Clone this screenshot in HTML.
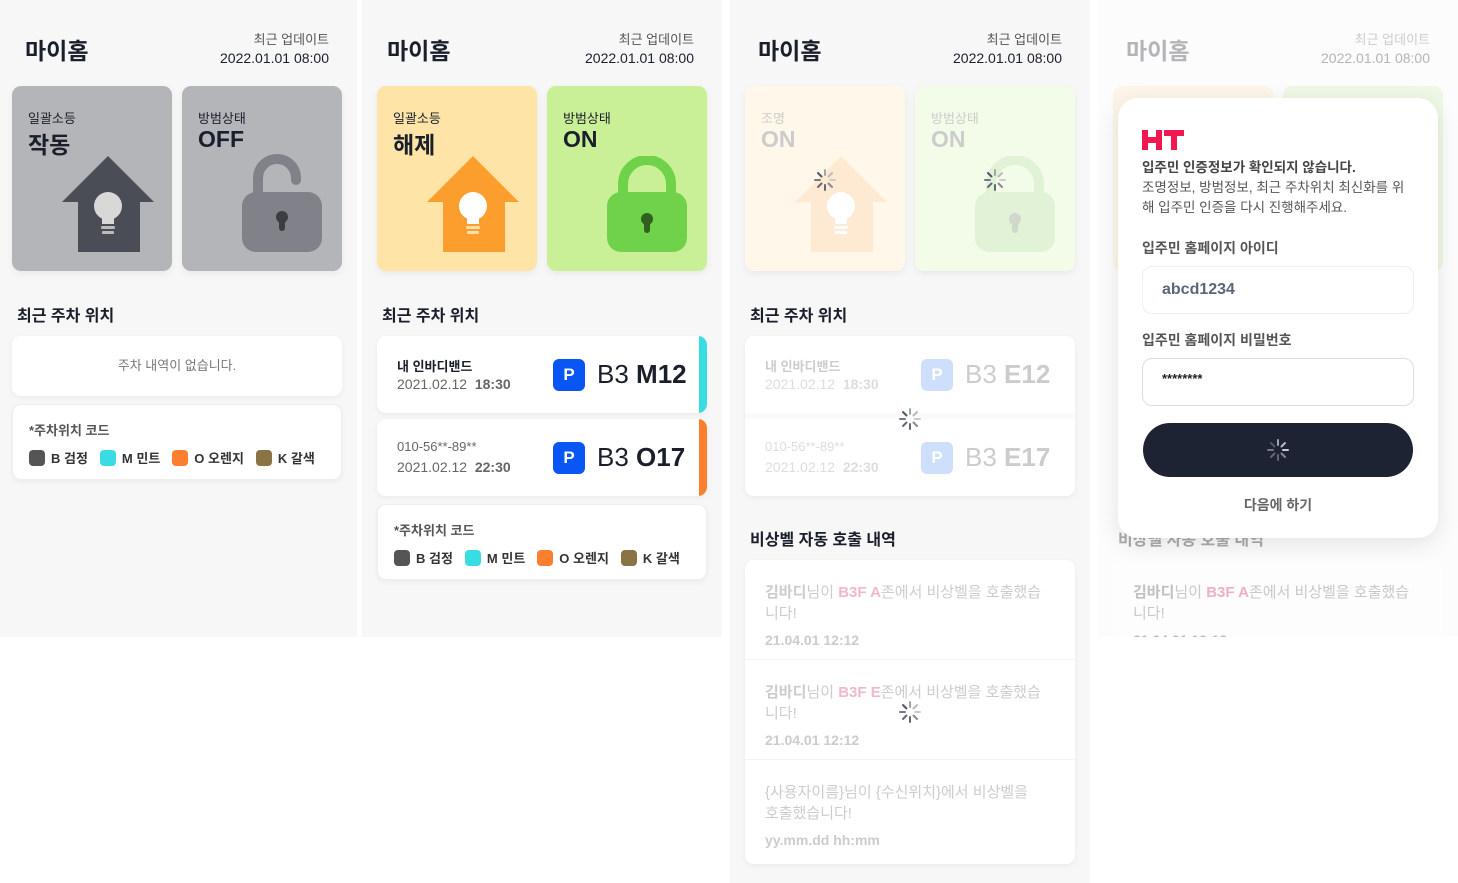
<!DOCTYPE html>
<html><head><meta charset="utf-8">
<style>
*{margin:0;padding:0;box-sizing:border-box}
body{width:1458px;height:883px;background:#fff;font-family:"Liberation Sans","Noto Sans CJK KR",sans-serif;position:relative;overflow:hidden;color:#1b1f2c}
.p{position:absolute;top:0;width:360px;background:#f7f7f7;overflow:hidden}
.a{position:absolute}
.t{left:25px;top:32px;font-size:23px;font-weight:700}
.up{right:28px;top:31px;text-align:right;font-size:13px;line-height:18px;color:#555}
.up b{font-weight:400;color:#1b1f2c;font-size:14px}
.tile{top:86px;width:160px;height:185px;border-radius:9px;box-shadow:0 3px 8px rgba(0,0,0,.06)}
.tile .s{position:absolute;left:16px;top:22px;font-size:13px}
.tile .v{position:absolute;left:16px;top:40px;font-size:23px;font-weight:700}
.h2{left:17px;top:302px;font-size:16px;font-weight:700}
.card{background:#fff;border-radius:9px;box-shadow:0 2px 6px rgba(0,0,0,.05);overflow:hidden}
.leg .l1{position:absolute;left:16px;top:15px;font-size:13px;color:#555;font-weight:700}
.leg .l2{position:absolute;left:16px;top:43px;font-size:13px;font-weight:700;color:#333;display:flex;gap:12px;align-items:center}
.leg i{display:inline-block;width:16px;height:16px;border-radius:4px;vertical-align:-3px;margin-right:6px}
.pk .n{position:absolute;left:20px;top:20px;font-size:13px;font-weight:700}
.pk .d{position:absolute;left:20px;top:40px;font-size:14px;color:#666}
.pk .pp{position:absolute;left:176px;top:23px;width:32px;height:32px;border-radius:6px;background:#0a56f5;color:#fff;font-weight:700;font-size:17px;text-align:center;line-height:32px}
.pk .c{position:absolute;left:220px;top:22px;font-size:26px;line-height:32px}
.pk .bar{position:absolute;right:0;top:0;width:8px;height:100%}
.em{padding:0 20px;font-size:15px;color:#ccc;line-height:21px;height:100px;border-bottom:1px solid #f3f3f3;padding-top:22px}
.em b{color:#f0b9c8}
.em .tm{font-weight:700;font-size:14px;margin-top:6px;color:#ccc}
</style></head><body>

<svg width="0" height="0" style="position:absolute">
<defs>
<g id="spin" stroke-width="2" stroke-linecap="round">
<line x1="0" y1="-10" x2="0" y2="-5" stroke="#9aa" /><line x1="7" y1="-7" x2="3.5" y2="-3.5" stroke="#bbb"/><line x1="10" y1="0" x2="5" y2="0" stroke="#ccc"/><line x1="7" y1="7" x2="3.5" y2="3.5" stroke="#889"/><line x1="0" y1="10" x2="0" y2="5" stroke="#667"/><line x1="-7" y1="7" x2="-3.5" y2="3.5" stroke="#667"/><line x1="-10" y1="0" x2="-5" y2="0" stroke="#778"/><line x1="-7" y1="-7" x2="-3.5" y2="-3.5" stroke="#556"/>
</g>
</defs></svg>

<!-- PANEL 1 -->
<div class="p" style="left:0;width:357px;height:637px">
<div class="a t">마이홈</div>
<div class="a up">최근 업데이트<br><b>2022.01.01 08:00</b></div>
<div class="a tile" style="left:12px;background:#b4b5b9"><div class="s">일괄소등</div><div class="v">작동</div>
<svg class="a" style="left:50px;top:70px" width="92" height="96" viewBox="0 0 92 96"><path d="M0 46L46 0L92 46H78V96H16V46Z" fill="#4a4d56"/><circle cx="46" cy="50" r="14" fill="#d8d8d8"/><rect x="40" y="60" width="12" height="8" fill="#d8d8d8"/><rect x="39" y="70" width="14" height="3" rx="1" fill="#bbb"/><rect x="40" y="75" width="12" height="3" rx="1" fill="#bbb"/></svg></div>
<div class="a tile" style="left:182px;background:#b4b5b9"><div class="s">방범상태</div><div class="v">OFF</div>
<svg class="a" style="left:60px;top:66px" width="80" height="100" viewBox="0 0 80 100"><path d="M16 42V26A19 19 0 0 1 54 26V28" stroke="#818289" stroke-width="10" fill="none" stroke-linecap="round"/><rect x="0" y="40" width="80" height="60" rx="14" fill="#818289"/><circle cx="40" cy="65" r="6" fill="#3c3d42"/><rect x="37" y="65" width="6" height="14" rx="3" fill="#3c3d42"/></svg></div>
<div class="a h2">최근 주차 위치</div>
<div class="a card" style="left:12px;top:336px;width:330px;height:60px;text-align:center;line-height:60px;font-size:13px;color:#777">주차 내역이 없습니다.</div>
<div class="a card leg" style="left:12px;top:404px;width:330px;height:76px;border:1px solid #eee"><div class="l1">*주차위치 코드</div><div class="l2"><span><i style="background:#555"></i>B 검정</span><span><i style="background:#3adce4"></i>M 민트</span><span><i style="background:#fb7f2e"></i>O 오렌지</span><span><i style="background:#8b7444"></i>K 갈색</span></div></div>
</div>

<!-- PANEL 2 -->
<div class="p" style="left:362px;height:637px">
<div class="a t">마이홈</div>
<div class="a up">최근 업데이트<br><b>2022.01.01 08:00</b></div>
<div class="a tile" style="left:15px;background:#fee4a6"><div class="s">일괄소등</div><div class="v">해제</div>
<svg class="a" style="left:50px;top:70px" width="92" height="96" viewBox="0 0 92 96"><path d="M0 46L46 0L92 46H78V96H16V46Z" fill="#fc9e2d"/><circle cx="46" cy="50" r="14" fill="#fff"/><rect x="40" y="60" width="12" height="8" fill="#fff"/><rect x="39" y="70" width="14" height="3" rx="1" fill="#fde0a8"/><rect x="40" y="75" width="12" height="3" rx="1" fill="#fde0a8"/></svg></div>
<div class="a tile" style="left:185px;background:#caf097"><div class="s">방범상태</div><div class="v">ON</div>
<svg class="a" style="left:60px;top:70px" width="80" height="96" viewBox="0 0 80 96"><path d="M16 44V28A24 24 0 0 1 64 28V44" stroke="#70d24a" stroke-width="10" fill="none"/><rect x="0" y="36" width="80" height="60" rx="14" fill="#70d24a"/><circle cx="40" cy="63" r="6" fill="#30601f"/><rect x="37" y="63" width="6" height="14" rx="3" fill="#30601f"/></svg></div>
<div class="a h2" style="left:20px">최근 주차 위치</div>
<div class="a card pk" style="left:15px;top:336px;width:330px;height:77px"><div class="n">내 인바디밴드</div><div class="d">2021.02.12 &nbsp;<b>18:30</b></div><div class="pp">P</div><div class="c">B3 <b>M12</b></div><div class="bar" style="background:#3adce4"></div></div>
<div class="a card pk" style="left:15px;top:419px;width:330px;height:77px"><div class="n" style="color:#666;font-weight:400">010-56**-89**</div><div class="d">2021.02.12 &nbsp;<b>22:30</b></div><div class="pp">P</div><div class="c">B3 <b>O17</b></div><div class="bar" style="background:#fb7f2e"></div></div>
<div class="a card leg" style="left:15px;top:504px;width:330px;height:76px;border:1px solid #eee"><div class="l1">*주차위치 코드</div><div class="l2"><span><i style="background:#555"></i>B 검정</span><span><i style="background:#3adce4"></i>M 민트</span><span><i style="background:#fb7f2e"></i>O 오렌지</span><span><i style="background:#8b7444"></i>K 갈색</span></div></div>
</div>

<!-- PANEL 3 -->
<div class="p" style="left:730px;height:883px">
<div class="a t" style="left:28px">마이홈</div>
<div class="a up">최근 업데이트<br><b>2022.01.01 08:00</b></div>
<div class="a tile" style="left:15px;background:#fff8ea;color:#ccc"><div class="s">조명</div><div class="v">ON</div>
<svg class="a" style="left:50px;top:70px" width="92" height="96" viewBox="0 0 92 96"><path d="M0 46L46 0L92 46H78V96H16V46Z" fill="#fee9d2"/><circle cx="46" cy="50" r="14" fill="#fff"/><rect x="40" y="60" width="12" height="8" fill="#fff"/><rect x="39" y="70" width="14" height="3" rx="1" fill="#fff"/><rect x="40" y="75" width="12" height="3" rx="1" fill="#fff"/></svg>
<svg class="a" style="left:68px;top:82px" width="24" height="24" viewBox="-12 -12 24 24"><use href="#spin"/></svg></div>
<div class="a tile" style="left:185px;background:#f3fce9;color:#ccc"><div class="s">방범상태</div><div class="v">ON</div>
<svg class="a" style="left:60px;top:70px" width="80" height="96" viewBox="0 0 80 96"><path d="M16 44V28A24 24 0 0 1 64 28V44" stroke="#e2f2d7" stroke-width="10" fill="none"/><rect x="0" y="36" width="80" height="60" rx="14" fill="#e2f2d7"/><circle cx="40" cy="63" r="6" fill="#cfd8cb"/><rect x="37" y="63" width="6" height="14" rx="3" fill="#cfd8cb"/></svg>
<svg class="a" style="left:68px;top:82px" width="24" height="24" viewBox="-12 -12 24 24"><use href="#spin"/></svg></div>
<div class="a h2" style="left:20px">최근 주차 위치</div>
<div class="a card pk" style="left:15px;top:336px;width:330px;height:160px;color:#ccc">
<div class="n" style="color:#ccc">내 인바디밴드</div><div class="d" style="color:#ddd">2021.02.12 &nbsp;<b>18:30</b></div><div class="pp" style="background:#cddffb">P</div><div class="c" style="color:#ccc">B3 <b>E12</b></div>
<div class="a" style="left:0;top:77px;width:100%;height:6px;background:#fafafa"></div>
<div class="n" style="top:103px;color:#ddd;font-weight:400">010-56**-89**</div><div class="d" style="top:123px;color:#ddd">2021.02.12 &nbsp;<b>22:30</b></div><div class="pp" style="top:106px;background:#cddffb">P</div><div class="c" style="top:105px;color:#ccc">B3 <b>E17</b></div>
<svg class="a" style="left:153px;top:71px" width="24" height="24" viewBox="-12 -12 24 24"><use href="#spin"/></svg>
</div>
<div class="a h2" style="left:20px;top:526px">비상벨 자동 호출 내역</div>
<div class="a card" style="left:15px;top:560px;width:330px;height:304px">
<div class="em"><b style="color:#ccc">김바디</b>님이 <b>B3F A</b>존에서 비상벨을 호출했습<br>니다!<div class="tm">21.04.01 12:12</div></div>
<div class="em"><b style="color:#ccc">김바디</b>님이 <b>B3F E</b>존에서 비상벨을 호출했습<br>니다!<div class="tm">21.04.01 12:12</div></div>
<div class="em" style="border:0">{사용자이름}님이 {수신위치}에서 비상벨을<br>호출했습니다!<div class="tm">yy.mm.dd hh:mm</div></div>
<svg class="a" style="left:153px;top:140px" width="24" height="24" viewBox="-12 -12 24 24"><use href="#spin"/></svg>
</div>
</div>

<!-- PANEL 4 -->
<div class="p" style="left:1098px;height:637px;background:#fcfcfc">
<div class="a t" style="left:28px;color:#b5b5b8">마이홈</div>
<div class="a up" style="color:#ccc">최근 업데이트<br><b style="color:#b5b5b8">2022.01.01 08:00</b></div>
<div class="a tile" style="left:15px;background:#fdf6e8;box-shadow:none"></div>
<div class="a tile" style="left:185px;background:#eef8e4;box-shadow:none"></div>
<div class="a h2" style="left:20px;top:526px;color:#aaa">비상벨 자동 호출 내역</div>
<div class="a card" style="left:15px;top:560px;width:330px;height:120px;box-shadow:none;background:#fdfdfd">
<div class="em" style="color:#c8c8c8"><b style="color:#c0c0c0">김바디</b>님이 <b style="color:#eeb0c0">B3F A</b>존에서 비상벨을 호출했습<br>니다!<div class="tm" style="color:#bbb">21.04.01 12:12</div></div></div>
<div class="a" style="left:20px;top:98px;width:320px;height:440px;background:#fff;border-radius:20px;box-shadow:0 6px 24px rgba(0,0,0,.1)">
<svg class="a" style="left:24px;top:32px" width="42" height="20" viewBox="0 0 42 20"><path d="M0 0h6v7h8V0h6v20h-6v-7H6v7H0z" fill="#f0194f"/><path d="M22 0h20v6h-7v14h-6V6h-7z" fill="#f0194f"/></svg>
<div class="a" style="left:24px;top:60px;font-size:13.5px;line-height:20px;color:#555;width:290px;white-space:nowrap"><b style="color:#444">입주민 인증정보가 확인되지 않습니다.</b><br>조명정보, 방범정보, 최근 주차위치 최신화를 위<br>해 입주민 인증을 다시 진행해주세요.</div>
<div class="a" style="left:24px;top:140px;font-size:14px;font-weight:700;color:#555">입주민 홈페이지 아이디</div>
<div class="a" style="left:24px;top:168px;width:272px;height:48px;border:1px solid #eee;border-radius:10px;padding-left:19px;line-height:46px;font-size:16px;font-weight:700;color:#5b6579">abcd1234</div>
<div class="a" style="left:24px;top:232px;font-size:14px;font-weight:700;color:#555">입주민 홈페이지 비밀번호</div>
<div class="a" style="left:24px;top:260px;width:272px;height:48px;border:1px solid #ddd;border-radius:10px;padding-left:19px;padding-top:12px;font-size:13px;font-weight:700;color:#222">********</div>
<div class="a" style="left:25px;top:325px;width:270px;height:54px;border-radius:27px;background:#1e2333"><svg class="a" style="left:123px;top:15px" width="24" height="24" viewBox="-12 -12 24 24"><use href="#spin"/></svg></div>
<div class="a" style="left:0;top:397px;width:320px;text-align:center;font-size:14px;font-weight:700;color:#666">다음에 하기</div>
</div>
</div>

</body></html>
